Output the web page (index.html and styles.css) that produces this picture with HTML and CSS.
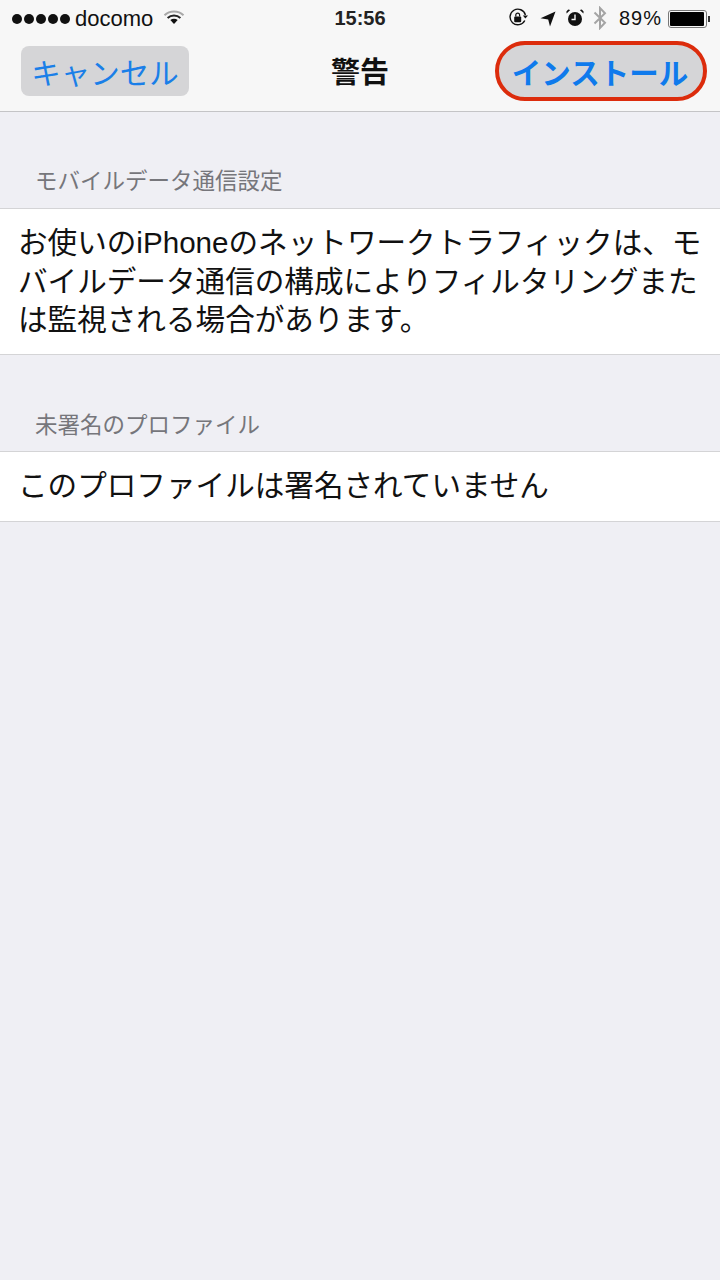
FILE: index.html
```html
<!DOCTYPE html>
<html lang="ja">
<head>
<meta charset="utf-8">
<title>警告</title>
<link rel="stylesheet" href="styles.css">
</head>
<body>
<header class="top">
  <div class="status">
    <div class="status-left">
      <span class="dots"><i></i><i></i><i></i><i></i><i></i></span>
      <span class="carrier">docomo</span>
      <svg class="wifi" width="22" height="16" viewBox="0 0 22 16"><path d="M1.5 6.2C6.8 1.2 15.2 1.2 20.5 6.2" fill="none" stroke="#a8a8a8" stroke-width="2"/><path d="M4.6 9C8.2 5.8 13.8 5.8 17.4 9" fill="none" stroke="#222" stroke-width="2"/><path d="M7.3 10.9 11 15 14.7 10.9C12.6 9.2 9.4 9.2 7.3 10.9Z" fill="#111"/></svg>
    </div>
    <div class="clock">15:56</div>
    <div class="status-right">
      <svg class="lock" width="20" height="20" viewBox="0 0 20 20"><path d="M16.8 12.5A7.8 7.8 0 1 1 17.4 7" fill="none" stroke="#111" stroke-width="1.4"/><path d="M14.8 7.5 20 7.5 17.4 10.5Z" fill="#111"/><rect x="6.2" y="8.6" width="7" height="5.6" rx="1" fill="#111"/><path d="M7.8 8.6V7A1.9 1.9 0 0 1 11.6 7V8.6" fill="none" stroke="#111" stroke-width="1.2"/></svg>
      <svg class="loc" width="16" height="16" viewBox="0 0 16 16"><path d="M0.5 7.2 15.5 0.5 10 15.5 8.2 8.5Z" fill="#111"/></svg>
      <svg class="alarm" width="18" height="18" viewBox="0 0 18 18"><circle cx="9" cy="10" r="7" fill="#111"/><path d="M9 5.5V10.5H5.5" fill="none" stroke="#f7f7f7" stroke-width="1.4"/><path d="M0.6 4.4 4.2 1 2.2 0.6 0.4 2.4ZM17.4 4.4 13.8 1 15.8 0.6 17.6 2.4Z" fill="#111"/></svg>
      <svg class="bt" width="14" height="24" viewBox="0 0 14 24"><path d="M1.5 6.5 12 16.8 7 22V2L12 7.2 1.5 17.5" fill="none" stroke="#a4a4a4" stroke-width="2"/></svg>
      <span class="pct">89%</span>
      <span class="battery"><b></b></span><span class="nub"></span>
    </div>
  </div>
  <nav class="nav">
    <button class="nav-btn cancel">キャンセル</button>
    <h1 class="title">警告</h1>
    <button class="nav-btn install">インストール</button>
  </nav>
</header>
<main>
  <section class="group first">
    <h2 class="group-label">モバイルデータ通信設定</h2>
    <p class="cell">お使いのiPhoneのネットワークトラフィックは、モバイルデータ通信の構成によりフィルタリングまたは監視される場合があります。</p>
  </section>
  <section class="group">
    <h2 class="group-label">未署名のプロファイル</h2>
    <p class="cell single">このプロファイルは署名されていません</p>
  </section>
</main>
</body>
</html>
```

FILE: styles.css
```css
* { box-sizing: border-box; }
html, body { margin: 0; padding: 0; }
body {
  width: 720px;
  height: 1280px;
  overflow: hidden;
  background: #efeff4;
  color: #111;
  font-family: "Liberation Sans", "Noto Sans CJK JP", sans-serif;
}
.top {
  height: 112px;
  background: #f7f7f7;
  border-bottom: 1px solid #c4c4c6;
}
.status {
  height: 37px;
  display: grid;
  grid-template-columns: minmax(0, 1fr) auto minmax(0, 1fr);
  align-items: center;
}
.status-left { display: flex; align-items: center; padding-left: 12px; }
.dots { display: flex; gap: 2px; }
.dots i { width: 10px; height: 10px; border-radius: 50%; background: #111; }
.carrier { font-size: 22px; margin-left: 5px; }
.wifi { margin-left: 10px; margin-top: -4px; }
.clock { font-size: 20px; font-weight: 700; color: #222; }
.status-right { display: flex; align-items: center; justify-content: flex-end; padding-right: 10px; }
.lock { margin-top: -1px; }
.loc { margin-left: 12px; }
.alarm { margin-left: 10px; margin-top: -2px; }
.bt { margin-left: 9px; margin-top: -1px; }
.pct { font-size: 20px; margin-left: 12px; letter-spacing: 1px; }
.battery { margin-left: 6px; width: 39px; height: 18px; border: 1px solid #777; border-radius: 3px; padding: 1px; display: flex; }
.battery b { width: 96%; background: #000; border-radius: 1px; }
.nub { width: 2px; height: 6px; background: #333; margin-left: 1px; }
.nav {
  height: 74px;
  display: grid;
  grid-template-columns: minmax(0, 1fr) auto minmax(0, 1fr);
  align-items: center;
}
.title { margin: -1px 0 0; font-size: 29px; font-weight: 700; color: #111; line-height: 1; }
.nav-btn {
  font-family: inherit;
  border: 0;
  font-size: 29.5px;
  color: #1a7fe8;
  background: #d5d5d7;
  padding: 0;
  height: 50px;
  border-radius: 8px;
  white-space: nowrap;
  margin-top: -6px;
}
.cancel { width: 168px; margin-left: 21px; justify-self: start; }
.install {
  justify-self: end;
  margin-right: 13px;
  width: 212px;
  height: 60px;
  padding-right: 2px;
  font-size: 29.5px;
  font-weight: 700;
  color: #0f7aec;
  border: 4px solid #dc2c0c;
  border-radius: 30px;
  margin-top: -6px;
}
.group-label {
  margin: 0;
  padding-left: 35px;
  display: flex;
  align-items: flex-end;
  font-size: 22.5px;
  font-weight: 400;
  color: #76767b;
  line-height: 1;
}
.group.first .group-label { height: 96px; padding-bottom: 15px; }
.group:not(.first) { padding-top: 11px; }
.group:not(.first) .group-label { height: 85px; padding-bottom: 14px; }
.cell {
  margin: 0;
  background: #fff;
  border-top: 1px solid #d4d4d6;
  border-bottom: 1px solid #d4d4d6;
  padding: 15px 16px 0 18px;
  font-size: 29.6px;
  line-height: 38.5px;
  color: #111;
  height: 147px;
}
.cell.single { height: 71px; padding: 15px 0 0 18px; }
```
